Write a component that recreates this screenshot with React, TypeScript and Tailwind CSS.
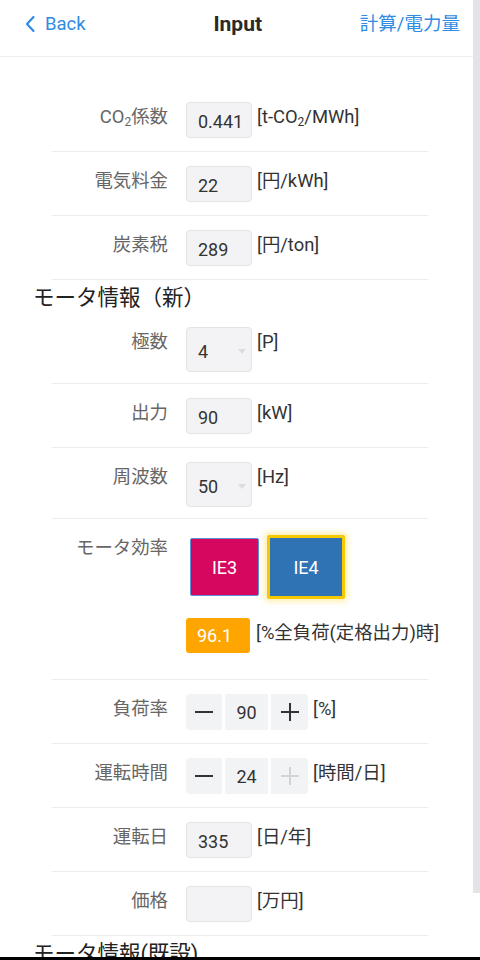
import React from "react";

const font = { fontFamily: 'Roboto, "Noto Sans CJK JP", sans-serif' };

const Row = ({ label, children, last }: { label: React.ReactNode; children: React.ReactNode; last?: boolean }) => (
    <div className={`flex items-start pt-[14px] pb-[13px] ${last ? "" : "border-b border-[#ececec]"}`}>
        <div className="w-[116px] shrink-0 text-right text-[18.4px] leading-[30px] whitespace-nowrap text-[#666]">{label}</div>
        <div className="ml-[18px] flex items-start">{children}</div>
    </div>
);

const Unit = ({ children }: { children: React.ReactNode }) => (
    <span className="ml-[5px] text-[18.4px] leading-[30px] whitespace-nowrap text-[#333]">{children}</span>
);

const Field = ({ value }: { value: string }) => (
    <div className="flex h-[36px] w-[66px] items-center rounded-[4px] border border-[#e4e4e6] bg-[#f3f3f5] pt-[2px] pl-[11px] text-[18px] text-[#333]">
        {value}
    </div>
);

const SelectBox = ({ value }: { value: string }) => (
    <div className="relative flex h-[45px] w-[66px] items-center rounded-[4px] border border-[#e4e4e6] bg-[#f3f3f5] pt-[3px] pl-[11px] text-[18px] text-[#333]">
        {value}
        <span className="absolute top-[21px] right-[5px] h-0 w-0 border-x-[4px] border-t-[5px] border-x-transparent border-t-[#dcdcdc]" />
    </div>
);

const Stepper = ({ value, plusDisabled }: { value: string; plusDisabled?: boolean }) => (
    <div className="flex h-[36px] gap-[3px]">
        <div className="flex w-[36px] items-center justify-center rounded-l-[4px] bg-[#f2f3f5]">
            <span className="h-[2px] w-[18px] bg-[#333]" />
        </div>
        <div className="flex w-[43px] items-center justify-center bg-[#f2f3f5] pt-[1px] text-[18px] text-[#333]">{value}</div>
        <div className="relative flex w-[37px] items-center justify-center rounded-r-[4px] bg-[#f2f3f5]">
            <span className={`absolute h-[2px] w-[18px] ${plusDisabled ? "bg-[#d4d4d4]" : "bg-[#333]"}`} />
            <span className={`absolute h-[18px] w-[2px] ${plusDisabled ? "bg-[#d4d4d4]" : "bg-[#333]"}`} />
        </div>
    </div>
);

const Heading = ({ children }: { children: React.ReactNode }) => (
    <div className="pl-[33px] text-[21.5px] leading-[35px] whitespace-nowrap text-[#222]">{children}</div>
);

export default function App() {
    return (
        <div className="relative h-[960px] w-[480px] overflow-hidden bg-white" style={font}>
            <header className="flex h-[57px] items-start justify-between border-b border-[#efefef] pt-[10px] pr-[20px] pl-[24px]">
                <div className="flex items-center gap-[9px] text-[18.5px] leading-[28px] text-[#2f8be3]">
                    <svg width="12" height="18" viewBox="0 0 12 18" fill="none">
                        <path d="M9.5 2 L3 9 L9.5 16" stroke="#2f8be3" strokeWidth="2.2" strokeLinecap="round" strokeLinejoin="round" />
                    </svg>
                    <span>Back</span>
                </div>
                <div className="pl-[30px] text-[21px] leading-[28px] font-bold text-[#2a2a2a]">Input</div>
                <div className="text-[18.5px] leading-[28px] text-[#2f8be3]">計算/電力量</div>
            </header>

            <div className="pt-[31px]">
                <div className="ml-[52px] w-[376px]">
                    <Row
                        label={
                            <span>
                                CO<sub className="text-[12px]">2</sub>係数
                            </span>
                        }
                    >
                        <Field value="0.441" />
                        <Unit>
                            [t-CO<sub className="text-[12px]">2</sub>/MWh]
                        </Unit>
                    </Row>
                    <Row label="電気料金">
                        <Field value="22" />
                        <Unit>[円/kWh]</Unit>
                    </Row>
                    <Row label="炭素税">
                        <Field value="289" />
                        <Unit>[円/ton]</Unit>
                    </Row>
                </div>

                <Heading>モータ情報（新）</Heading>

                <div className="ml-[52px] w-[376px]">
                    <div className="flex items-start border-b border-[#ececec] pt-[12px] pb-[11px]">
                        <div className="w-[116px] shrink-0 text-right text-[18.4px] leading-[30px] text-[#666]">極数</div>
                        <div className="ml-[18px] flex items-start">
                            <SelectBox value="4" />
                            <Unit>[P]</Unit>
                        </div>
                    </div>
                    <Row label="出力">
                        <Field value="90" />
                        <Unit>[kW]</Unit>
                    </Row>
                    <div className="flex items-start border-b border-[#ececec] pt-[14px] pb-[11px]">
                        <div className="w-[116px] shrink-0 text-right text-[18.4px] leading-[30px] text-[#666]">周波数</div>
                        <div className="ml-[18px] flex items-start">
                            <SelectBox value="50" />
                            <Unit>[Hz]</Unit>
                        </div>
                    </div>

                    <div className="flex items-start border-b border-[#ececec] pt-[16px] pb-[26px]">
                        <div className="w-[116px] shrink-0 text-right text-[18.4px] leading-[26px] whitespace-nowrap text-[#666]">モータ効率</div>
                        <div className="ml-[18px] flex flex-col">
                            <div className="flex h-[64px] items-center gap-[8px] pl-[4px]">
                                <button className="flex h-[58px] w-[69px] items-center justify-center rounded-[2px] border border-[#5d8fd6] bg-[#d5075e] text-[18px] text-white">
                                    IE3
                                </button>
                                <button className="flex h-[64px] w-[78px] items-center justify-center rounded-[2px] border-[3px] border-[#f6c800] bg-[#2f73b5] text-[18px] text-white shadow-[0_0_6px_2px_rgba(250,210,40,0.45)]">
                                    IE4
                                </button>
                            </div>
                            <div className="mt-[19px] flex items-start">
                                <div className="flex h-[35px] w-[64px] items-center rounded-[3px] bg-[#ffa500] pl-[11px] text-[18px] text-white">
                                    96.1
                                </div>
                                <span className="ml-[6px] text-[18.4px] leading-[30px] whitespace-nowrap text-[#333]">
                                    [%全負荷(定格出力)時]
                                </span>
                            </div>
                        </div>
                    </div>

                    <Row label="負荷率">
                        <Stepper value="90" />
                        <Unit>[%]</Unit>
                    </Row>
                    <Row label="運転時間">
                        <Stepper value="24" plusDisabled />
                        <Unit>[時間/日]</Unit>
                    </Row>
                    <Row label="運転日">
                        <Field value="335" />
                        <Unit>[日/年]</Unit>
                    </Row>
                    <Row label="価格">
                        <Field value="" />
                        <Unit>[万円]</Unit>
                    </Row>
                </div>

                <Heading>モータ情報(既設)</Heading>
            </div>

            <div className="absolute top-0 right-0 h-[893px] w-[7px] bg-[#e4e4e8]" />
            <div className="absolute right-0 bottom-0 left-0 h-[3px] bg-black" />
        </div>
    );
}
